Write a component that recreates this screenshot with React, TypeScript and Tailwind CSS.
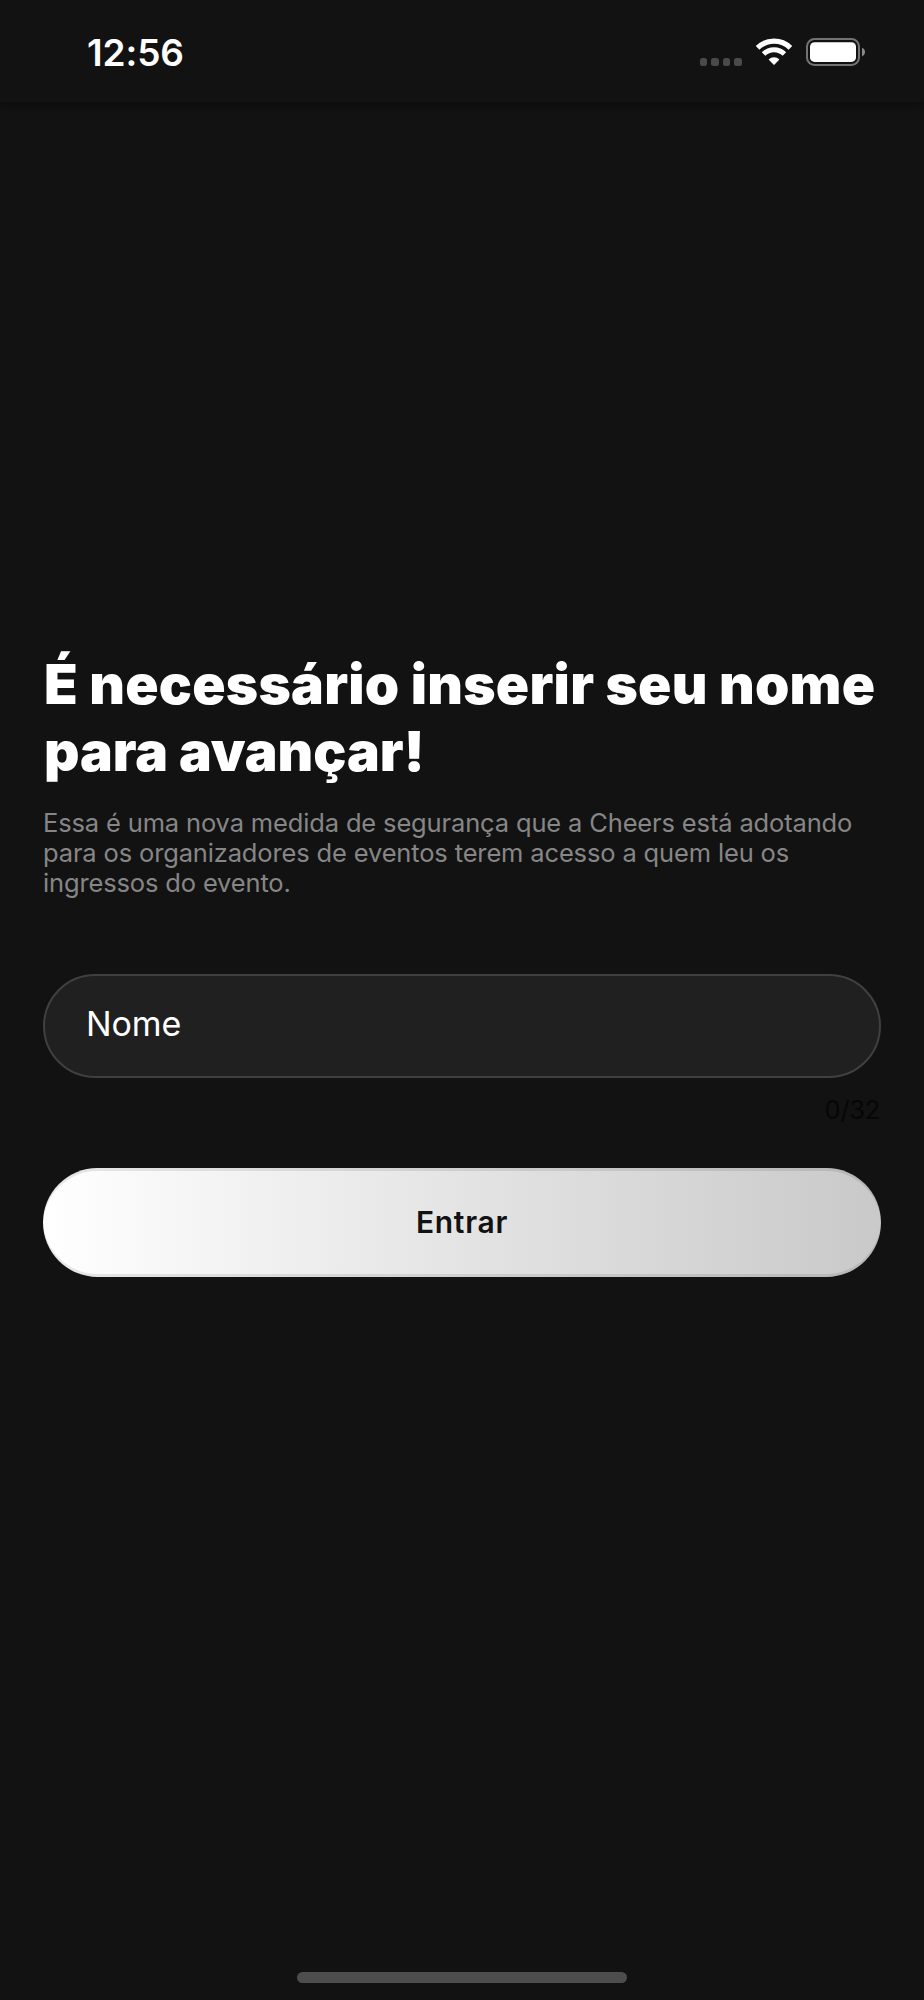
import { useState } from "react";

const MAX_NAME = 32;

function SignalDots() {
  return (
    <div className="mt-[19.5px] flex gap-1">
      {[0, 1, 2, 3].map((i) => (
        <span key={i} className="h-2 w-[7.6px] rounded-[2.5px] bg-[#4a4a4a]" />
      ))}
    </div>
  );
}

function WifiIcon() {
  return (
    <svg width="38" height="28" viewBox="0 0 38 28" fill="none" stroke="#fff">
      <path d="M2.6 9.8a23.4 23.4 0 0 1 32.8 0" strokeWidth="5.2" />
      <path d="M8.6 16a14.8 14.8 0 0 1 20.8 0" strokeWidth="5" />
      <path d="M13.6 21.4a7.9 7.9 0 0 1 10.8 0L19.6 26.4a.9.9 0 0 1-1.2 0Z" fill="#fff" stroke="none" />
    </svg>
  );
}

function BatteryIcon() {
  return (
    <svg width="60" height="28" viewBox="0 0 60 28">
      <rect x="1" y="1" width="52" height="26" rx="7.5" fill="none" stroke="#737373" strokeWidth="2" />
      <rect x="4" y="4.3" width="46" height="19.6" rx="4.5" fill="#fff" />
      <path d="M56 9.8c4 1.6 4 7 0 8.6Z" fill="#8a8a8a" />
    </svg>
  );
}

function StatusBar() {
  return (
    <header className="flex h-[102px] shrink-0 justify-between bg-[#121212] pr-[58px] pl-[87px] shadow-[0_3px_7px_rgba(0,0,0,0.35)]">
      <time className="mt-[31px] h-11 text-[37px] leading-[44px] font-semibold tracking-[-0.1px]">12:56</time>
      <div className="flex pt-[38px]">
        <SignalDots />
        <div className="ml-[13px]">
          <WifiIcon />
        </div>
        <div className="ml-[13px]">
          <BatteryIcon />
        </div>
      </div>
    </header>
  );
}

export default function App() {
  const [name, setName] = useState("");

  return (
    <div className="flex h-[2000px] w-[924px] flex-col overflow-hidden bg-[#121212] font-['Inter',sans-serif] text-white">
      <StatusBar />

      <main className="flex flex-1 flex-col px-[43px] pt-[549px]">
        <h1 className="pl-px text-[55px] leading-[67px] font-black whitespace-nowrap">
          <span className="block tracking-[0.27px]">É necessário inserir seu nome</span>
          <span className="block tracking-[0px]">para avançar!</span>
        </h1>
        <p className="mt-[23px] text-[25.5px] leading-[30.2px] tracking-[-0.15px] whitespace-nowrap text-[#868686]">
          <span className="block">Essa é uma nova medida de segurança que a Cheers está adotando</span>
          <span className="block">para os organizadores de eventos terem acesso a quem leu os</span>
          <span className="block">ingressos do evento.</span>
        </p>

        <input
          value={name}
          maxLength={MAX_NAME}
          placeholder="Nome"
          onChange={(e) => setName(e.target.value)}
          className="mt-[75px] h-[104px] w-full shrink-0 rounded-full border-2 border-[#404040] bg-[#202020] px-[41px] pb-1 text-[34px] tracking-[-0.1px] outline-none placeholder:text-white"
        />
        <div className="mt-4 pr-px text-right text-[25.5px] leading-8 tracking-[-0.3px] text-[#060606]">
          {name.length}/{MAX_NAME}
        </div>

        <button className="mt-[42px] h-[109px] w-full shrink-0 rounded-full bg-linear-to-r from-white to-[#c9c9c9] text-[30px] font-semibold tracking-[0.7px] text-[#121212] shadow-[inset_0_3px_0_rgba(0,0,0,0.09),inset_0_-3px_0_rgba(0,0,0,0.09)]">
          Entrar
        </button>
      </main>

      <div className="mx-auto mb-[17px] h-[11px] w-[330px] shrink-0 rounded-full bg-[#4d4d4d]" />
    </div>
  );
}
